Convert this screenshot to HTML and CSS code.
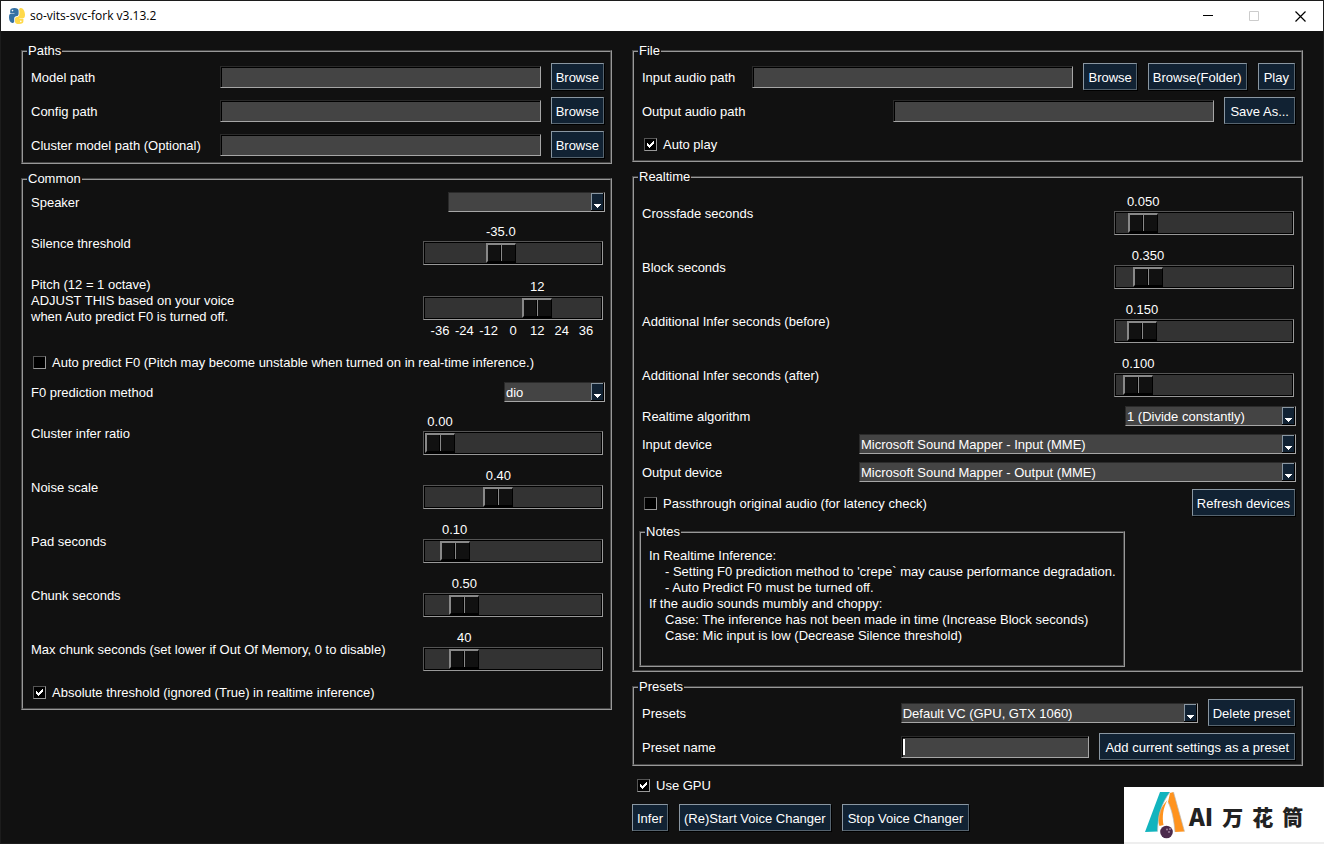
FILE: index.html
```html
<!DOCTYPE html>
<html lang="en">
<head>
	<meta charset="UTF-8">
	<title>so-vits-svc-fork v3.13.2</title>
	<link rel="stylesheet" href="styles.css">
</head>
<body>
	<header class="titlebar">
		<svg class="logo" width="16" height="16" viewBox="0 0 16 16">
			<path fill="#3571a3" d="M5.500 0C2.500 0 1.200 1 1.200 2.800V5h4.300v.6H2.200C.7 5.600 0 7 0 9.200c0 3 1 5.300 3.200 5.800 1 .2 2-.2 2-1.400v-2.800C5.200 9 6 8.400 7.200 8.200 9 8 9.600 7 9.600 5.400V2.800C9.600 1 8 0 5.500 0z"/>
			<path fill="#ffd94a" d="M10.500 .4C9.800 1 10.400 2 10.400 3v2.800C10.400 8 9.400 8.800 7.800 9 6.400 9.200 6 10 6 11.200v2.200C6 15.200 7.500 16 10 16c3 0 4.400-1 4.400-2.800V11h-4v-.6h3.400C15.300 10.400 16 9 16 6.800 16 3 14 .2 12 0c-.6 0-1.100.1-1.500.4z"/>
			<circle cx="3.500" cy="2.600" r=".8" fill="#fff"/>
			<circle cx="11.800" cy="13.400" r=".8" fill="#fff"/>
		</svg>
		<h1>so-vits-svc-fork v3.13.2</h1>
		<div class="window-buttons">
			<button type="button" aria-label="Minimize"><svg width="10" height="10"><path d="M0 4.500h10" stroke="#000"/></svg></button>
			<button type="button" aria-label="Maximize" disabled><svg width="10" height="10"><path d="M.5 .5h9v9h-9z" fill="none" stroke="#ccc"/></svg></button>
			<button type="button" aria-label="Close"><svg width="11" height="11"><path d="M.5 .5l10 10M10.500 .5l-10 10" stroke="#000" stroke-width="1.200"/></svg></button>
		</div>
	</header>

	<main>
		<div class="column">
			<fieldset>
				<legend>Paths</legend>
				<div class="row">
					<label for="modelPath">Model path</label>
					<input type="text" id="modelPath" class="path">
					<button type="button">Browse</button>
				</div>
				<div class="row">
					<label for="configPath">Config path</label>
					<input type="text" id="configPath" class="path">
					<button type="button">Browse</button>
				</div>
				<div class="row">
					<label for="clusterPath">Cluster model path (Optional)</label>
					<input type="text" id="clusterPath" class="path">
					<button type="button">Browse</button>
				</div>
			</fieldset>

			<fieldset>
				<legend>Common</legend>
				<div class="row combo">
					<label for="speaker">Speaker</label>
					<select id="speaker" class="speaker"><option></option></select>
				</div>
				<div class="row scale">
					<label for="silence">Silence threshold</label>
					<div class="slider">
						<div class="value"><output for="silence" style="margin-left:41.67%">-35.0</output></div>
						<input type="range" id="silence" min="-60" max="0" step="0.1" value="-35">
					</div>
				</div>
				<div class="row scale pitch">
					<label for="pitch">Pitch (12 = 1 octave)<br>ADJUST THIS based on your voice<br>when Auto predict F0 is turned off.</label>
					<div class="slider">
						<div class="value"><output for="pitch" style="margin-left:66.67%">12</output></div>
						<input type="range" id="pitch" min="-36" max="36" value="12">
						<div class="ticks"><span>-36</span><span>-24</span><span>-12</span><span>0</span><span>12</span><span>24</span><span>36</span></div>
					</div>
				</div>
				<div class="row check">
					<input type="checkbox" id="autoPredict">
					<label for="autoPredict">Auto predict F0 (Pitch may become unstable when turned on in real-time inference.)</label>
				</div>
				<div class="row combo">
					<label for="f0Method">F0 prediction method</label>
					<select id="f0Method" class="method"><option>dio</option></select>
				</div>
				<div class="row scale">
					<label for="clusterRatio">Cluster infer ratio</label>
					<div class="slider">
						<div class="value"><output for="clusterRatio" style="margin-left:0%">0.00</output></div>
						<input type="range" id="clusterRatio" min="0" max="1" step="0.01" value="0">
					</div>
				</div>
				<div class="row scale">
					<label for="noise">Noise scale</label>
					<div class="slider">
						<div class="value"><output for="noise" style="margin-left:40%">0.40</output></div>
						<input type="range" id="noise" min="0" max="1" step="0.01" value="0.4">
					</div>
				</div>
				<div class="row scale">
					<label for="pad">Pad seconds</label>
					<div class="slider">
						<div class="value"><output for="pad" style="margin-left:10%">0.10</output></div>
						<input type="range" id="pad" min="0" max="1" step="0.01" value="0.1">
					</div>
				</div>
				<div class="row scale">
					<label for="chunk">Chunk seconds</label>
					<div class="slider">
						<div class="value"><output for="chunk" style="margin-left:16.67%">0.50</output></div>
						<input type="range" id="chunk" min="0" max="3" step="0.01" value="0.5">
					</div>
				</div>
				<div class="row scale">
					<label for="maxChunk">Max chunk seconds (set lower if Out Of Memory, 0 to disable)</label>
					<div class="slider">
						<div class="value"><output for="maxChunk" style="margin-left:16.67%">40</output></div>
						<input type="range" id="maxChunk" min="0" max="240" value="40">
					</div>
				</div>
				<div class="row check">
					<input type="checkbox" id="absThreshold" checked>
					<label for="absThreshold">Absolute threshold (ignored (True) in realtime inference)</label>
				</div>
			</fieldset>
		</div>

		<div class="column">
			<fieldset>
				<legend>File</legend>
				<div class="row">
					<label for="inputAudio">Input audio path</label>
					<input type="text" id="inputAudio" class="path">
					<button type="button">Browse</button>
					<button type="button">Browse(Folder)</button>
					<button type="button" class="wide">Play</button>
				</div>
				<div class="row">
					<label for="outputAudio">Output audio path</label>
					<input type="text" id="outputAudio" class="path">
					<button type="button" class="wide">Save As...</button>
				</div>
				<div class="row check">
					<input type="checkbox" id="autoPlay" checked>
					<label for="autoPlay">Auto play</label>
				</div>
			</fieldset>

			<fieldset>
				<legend>Realtime</legend>
				<div class="row scale">
					<label for="crossfade">Crossfade seconds</label>
					<div class="slider">
						<div class="value"><output for="crossfade" style="margin-left:8.33%">0.050</output></div>
						<input type="range" id="crossfade" min="0" max="0.6" step="0.001" value="0.05">
					</div>
				</div>
				<div class="row scale">
					<label for="block">Block seconds</label>
					<div class="slider">
						<div class="value"><output for="block" style="margin-left:11.67%">0.350</output></div>
						<input type="range" id="block" min="0" max="3" step="0.001" value="0.35">
					</div>
				</div>
				<div class="row scale">
					<label for="before">Additional Infer seconds (before)</label>
					<div class="slider">
						<div class="value"><output for="before" style="margin-left:7.5%">0.150</output></div>
						<input type="range" id="before" min="0" max="2" step="0.001" value="0.15">
					</div>
				</div>
				<div class="row scale">
					<label for="after">Additional Infer seconds (after)</label>
					<div class="slider">
						<div class="value"><output for="after" style="margin-left:5%">0.100</output></div>
						<input type="range" id="after" min="0" max="2" step="0.001" value="0.1">
					</div>
				</div>
				<div class="row combo">
					<label for="algorithm">Realtime algorithm</label>
					<select id="algorithm" class="algorithm"><option>1 (Divide constantly)</option></select>
				</div>
				<div class="row combo">
					<label for="inputDevice">Input device</label>
					<select id="inputDevice" class="device"><option>Microsoft Sound Mapper - Input (MME)</option></select>
				</div>
				<div class="row combo">
					<label for="outputDevice">Output device</label>
					<select id="outputDevice" class="device"><option>Microsoft Sound Mapper - Output (MME)</option></select>
				</div>
				<div class="row">
					<div class="check">
						<input type="checkbox" id="passthrough">
						<label for="passthrough">Passthrough original audio (for latency check)</label>
					</div>
					<button type="button">Refresh devices</button>
				</div>
				<fieldset class="notes">
					<legend>Notes</legend>
					<p>In Realtime Inference:</p>
					<p class="indent">- Setting F0 prediction method to 'crepe` may cause performance degradation.</p>
					<p class="indent">- Auto Predict F0 must be turned off.</p>
					<p>If the audio sounds mumbly and choppy:</p>
					<p class="indent">Case: The inference has not been made in time (Increase Block seconds)</p>
					<p class="indent">Case: Mic input is low (Decrease Silence threshold)</p>
				</fieldset>
			</fieldset>

			<fieldset>
				<legend>Presets</legend>
				<div class="row">
					<label for="presets">Presets</label>
					<select id="presets" class="presets"><option>Default VC (GPU, GTX 1060)</option></select>
					<button type="button">Delete preset</button>
				</div>
				<div class="row">
					<label for="presetName">Preset name</label>
					<input type="text" id="presetName" class="preset-name">
					<button type="button" class="wide">Add current settings as a preset</button>
				</div>
			</fieldset>

			<div class="actions">
				<div class="row check">
					<input type="checkbox" id="useGpu" checked>
					<label for="useGpu">Use GPU</label>
				</div>
				<div class="row buttons">
					<button type="button">Infer</button>
					<button type="button">(Re)Start Voice Changer</button>
					<button type="button" class="wide">Stop Voice Changer</button>
				</div>
			</div>
		</div>
	</main>

	<div class="brand">
		<svg width="42" height="50" viewBox="0 0 42 50">
			<path fill="#12b4be" d="M16 2h10C17 14 14 26 13.500 41.500L1 42z"/>
			<path fill="#ff931e" d="M26 3l3.500-1L40.500 41.500 31 42C30 30 28 20 24 12z"/>
			<path fill="#ff931e" d="M23.500 10C14 20 13 28 15.500 36l4-1C18 27 19 18 23.500 10z"/>
			<path fill="none" stroke="#bbb" stroke-width=".7" d="M26 2C17 14 14 26 13.500 41.500M24 12c4 8 6 18 7 30M29.500 2L40.500 41.500"/>
			<circle cx="22.500" cy="42" r="6.300" fill="#4b2a4c"/>
			<circle cx="23" cy="39.500" r=".9" fill="#a58aa5"/>
			<circle cx="26" cy="39" r=".9" fill="#a58aa5"/>
			<circle cx="25" cy="42" r=".9" fill="#a58aa5"/>
		</svg>
		<div class="brand-name">
			<span class="latin">AI</span><span>万</span><span>花</span><span>筒</span>
		</div>
	</div>
</body>
</html>
```
FILE: styles.css
```css
* {
	box-sizing:border-box;
}
body {
	margin:0;
	min-height:100vh;
	background-color:#111;
	border:1px solid #1c1c1c;
	color:#fff;
	font:13px/16px "Liberation Sans", Arial, sans-serif;
}
button, input, select {
	font:inherit;
	color:inherit;
	margin:0;
}

/* title bar */
.titlebar {
	display:flex;
	align-items:center;
	height:30px;
	padding-left:8px;
	background-color:#fff;
	color:#000;
}
.titlebar h1 {
	margin:0 0 0 5px;
	font:12px/16px "Open Sans", "Noto Sans", sans-serif;
}
.window-buttons {
	display:flex;
	margin-left:auto;
}
.window-buttons button {
	display:flex;
	align-items:center;
	justify-content:center;
	width:46px;
	height:30px;
	padding:0;
	border:0;
	background:none;
}

main {
	display:grid;
	grid-template-columns:591fr 671fr;
	gap:20px;
	padding:13px 20px 8px;
}
.column {
	display:flex;
	flex-direction:column;
	gap:8px;
}

/* frames */
fieldset {
	margin:0;
	min-width:0;
	padding:2px 5px 0 8px;
	border:2px groove #999;
}
legend {
	margin-left:-4px;
	padding:0 1px;
	line-height:14px;
}
.row {
	display:flex;
	align-items:center;
	gap:10px;
	height:34px;
}
.row > :first-child {
	margin-right:auto;
}
.row.combo {
	height:28px;
}
.row.check {
	height:32px;
}
.check {
	display:flex;
	align-items:center;
	gap:6px;
	padding-left:2px;
}
.row.check > :first-child {
	margin-right:0;
}

/* controls */
label {
	padding-top:2px;
}
main button {
	height:27px;
	margin:0 1px 1px 0;
	padding:2px 4px 0;
	border:1px solid;
	border-color:#8a97a2 #56646f #56646f #8a97a2;
	box-shadow:1px 1px 0 #000;
	background-color:#112233;
	white-space:nowrap;
}
main .wide {
	padding:2px 5px 0;
}
input[type=text] {
	height:22px;
	padding:1px 2px;
	border:1px solid;
	border-color:#2a2a2a #a6a6a6 #a6a6a6 #2a2a2a;
	border-radius:0;
	box-shadow:inset 1px 1px 0 #000;
	background-color:#444;
	outline:0;
}
.path {
	width:321px;
}
.preset-name {
	width:188px;
	background:linear-gradient(#fff, #fff) 1px 2px / 2px 16px no-repeat;
}
select {
	appearance:none;
	height:20px;
	padding:2px 16px 0 1px;
	border:1px solid;
	border-color:#2a2a2a #a6a6a6 #a6a6a6 #2a2a2a;
	border-radius:0;
	background:#444 url("data:image/svg+xml,%3Csvg xmlns='http://www.w3.org/2000/svg' width='13' height='18' shape-rendering='crispEdges'%3E%3Cpath fill='%23000' d='M0 0h13v18H0z'/%3E%3Cpath fill='%238a97a2' d='M0 0h12v17H0z'/%3E%3Cpath fill='%23112233' d='M1 1h11v16H1z'/%3E%3Cpath fill='%23fff' d='M3 11h7v1H3zM4 12h5v1H4zM5 13h3v1H5zM6 14h1v1H6z'/%3E%3C/svg%3E") right top no-repeat;
}
.speaker {
	width:157px;
}
.method {
	width:101px;
}
.algorithm {
	width:171px;
}
.device {
	width:437px;
}
.presets {
	width:297px;
}
input[type=checkbox] {
	appearance:none;
	width:13px;
	height:13px;
	border:1px solid;
	border-color:#555 #999 #999 #555;
	background-color:#000;
}
input[type=checkbox]:checked {
	background-image:url("data:image/svg+xml,%3Csvg xmlns='http://www.w3.org/2000/svg' width='11' height='11' shape-rendering='crispEdges'%3E%3Cpath fill='%23fff' d='M2 4h1v1h1v1h1V5h1V4h1V3h1V2h1v3H8v1H7v1H6v1H5v1H4V8H3V7H2z'/%3E%3C/svg%3E");
}

/* sliders */
.row.scale {
	align-items:flex-start;
	height:54px;
}
.scale label {
	align-self:center;
}
.slider {
	width:180px;
	margin-right:2px;
	padding-top:8px;
}
.value, .ticks {
	display:flex;
	height:16px;
	padding:0 17px;
}
.value {
	margin-bottom:1px;
}
.value output, .ticks span {
	display:flex;
	justify-content:center;
	width:0;
	white-space:nowrap;
}
.ticks {
	justify-content:space-between;
	margin-top:3px;
}
input[type=range] {
	appearance:none;
	display:block;
	width:100%;
	height:24px;
	padding:1px;
	border:1px solid;
	border-color:#555 #999 #999 #555;
	box-shadow:inset 0 0 0 1px #000;
	background-color:#333;
}
input[type=range]::-webkit-slider-thumb {
	appearance:none;
	width:30px;
	height:20px;
	border:solid;
	border-width:2px 1px 2px 2px;
	border-color:#888 #000 #000 #888;
	background:linear-gradient(90deg, #111 12px, #000 12px, #000 13px, #888 13px, #888 14px, #111 14px);
}
.row.pitch {
	height:76px;
}
.pitch label {
	align-self:flex-start;
	padding-top:7px;
}
.pitch .slider {
	padding-top:9px;
}

.notes {
	width:486px;
	margin:5px 0 3px -3px;
	padding:9px 8px 21px;
}
.notes p {
	margin:0;
	white-space:nowrap;
}
.notes .indent {
	padding-left:16px;
}

.actions {
	margin-top:-5px;
}
.actions .check {
	padding-left:5px;
}
.actions .buttons > :first-child {
	margin-right:1px;
}

/* brand badge over the corner of the window */
.brand {
	position:fixed;
	right:0;
	bottom:0;
	display:flex;
	align-items:center;
	gap:3px;
	width:200px;
	height:57px;
	padding-left:20px;
	background-color:#fff;
	border-bottom:2px solid #eee;
	color:#222;
	font:900 21px/30px "Noto Sans CJK SC", sans-serif;
}
.brand-name {
	display:flex;
	align-items:center;
	gap:9px;
	padding-top:2px;
}
.brand .latin {
	font-size:24px;
}
```
